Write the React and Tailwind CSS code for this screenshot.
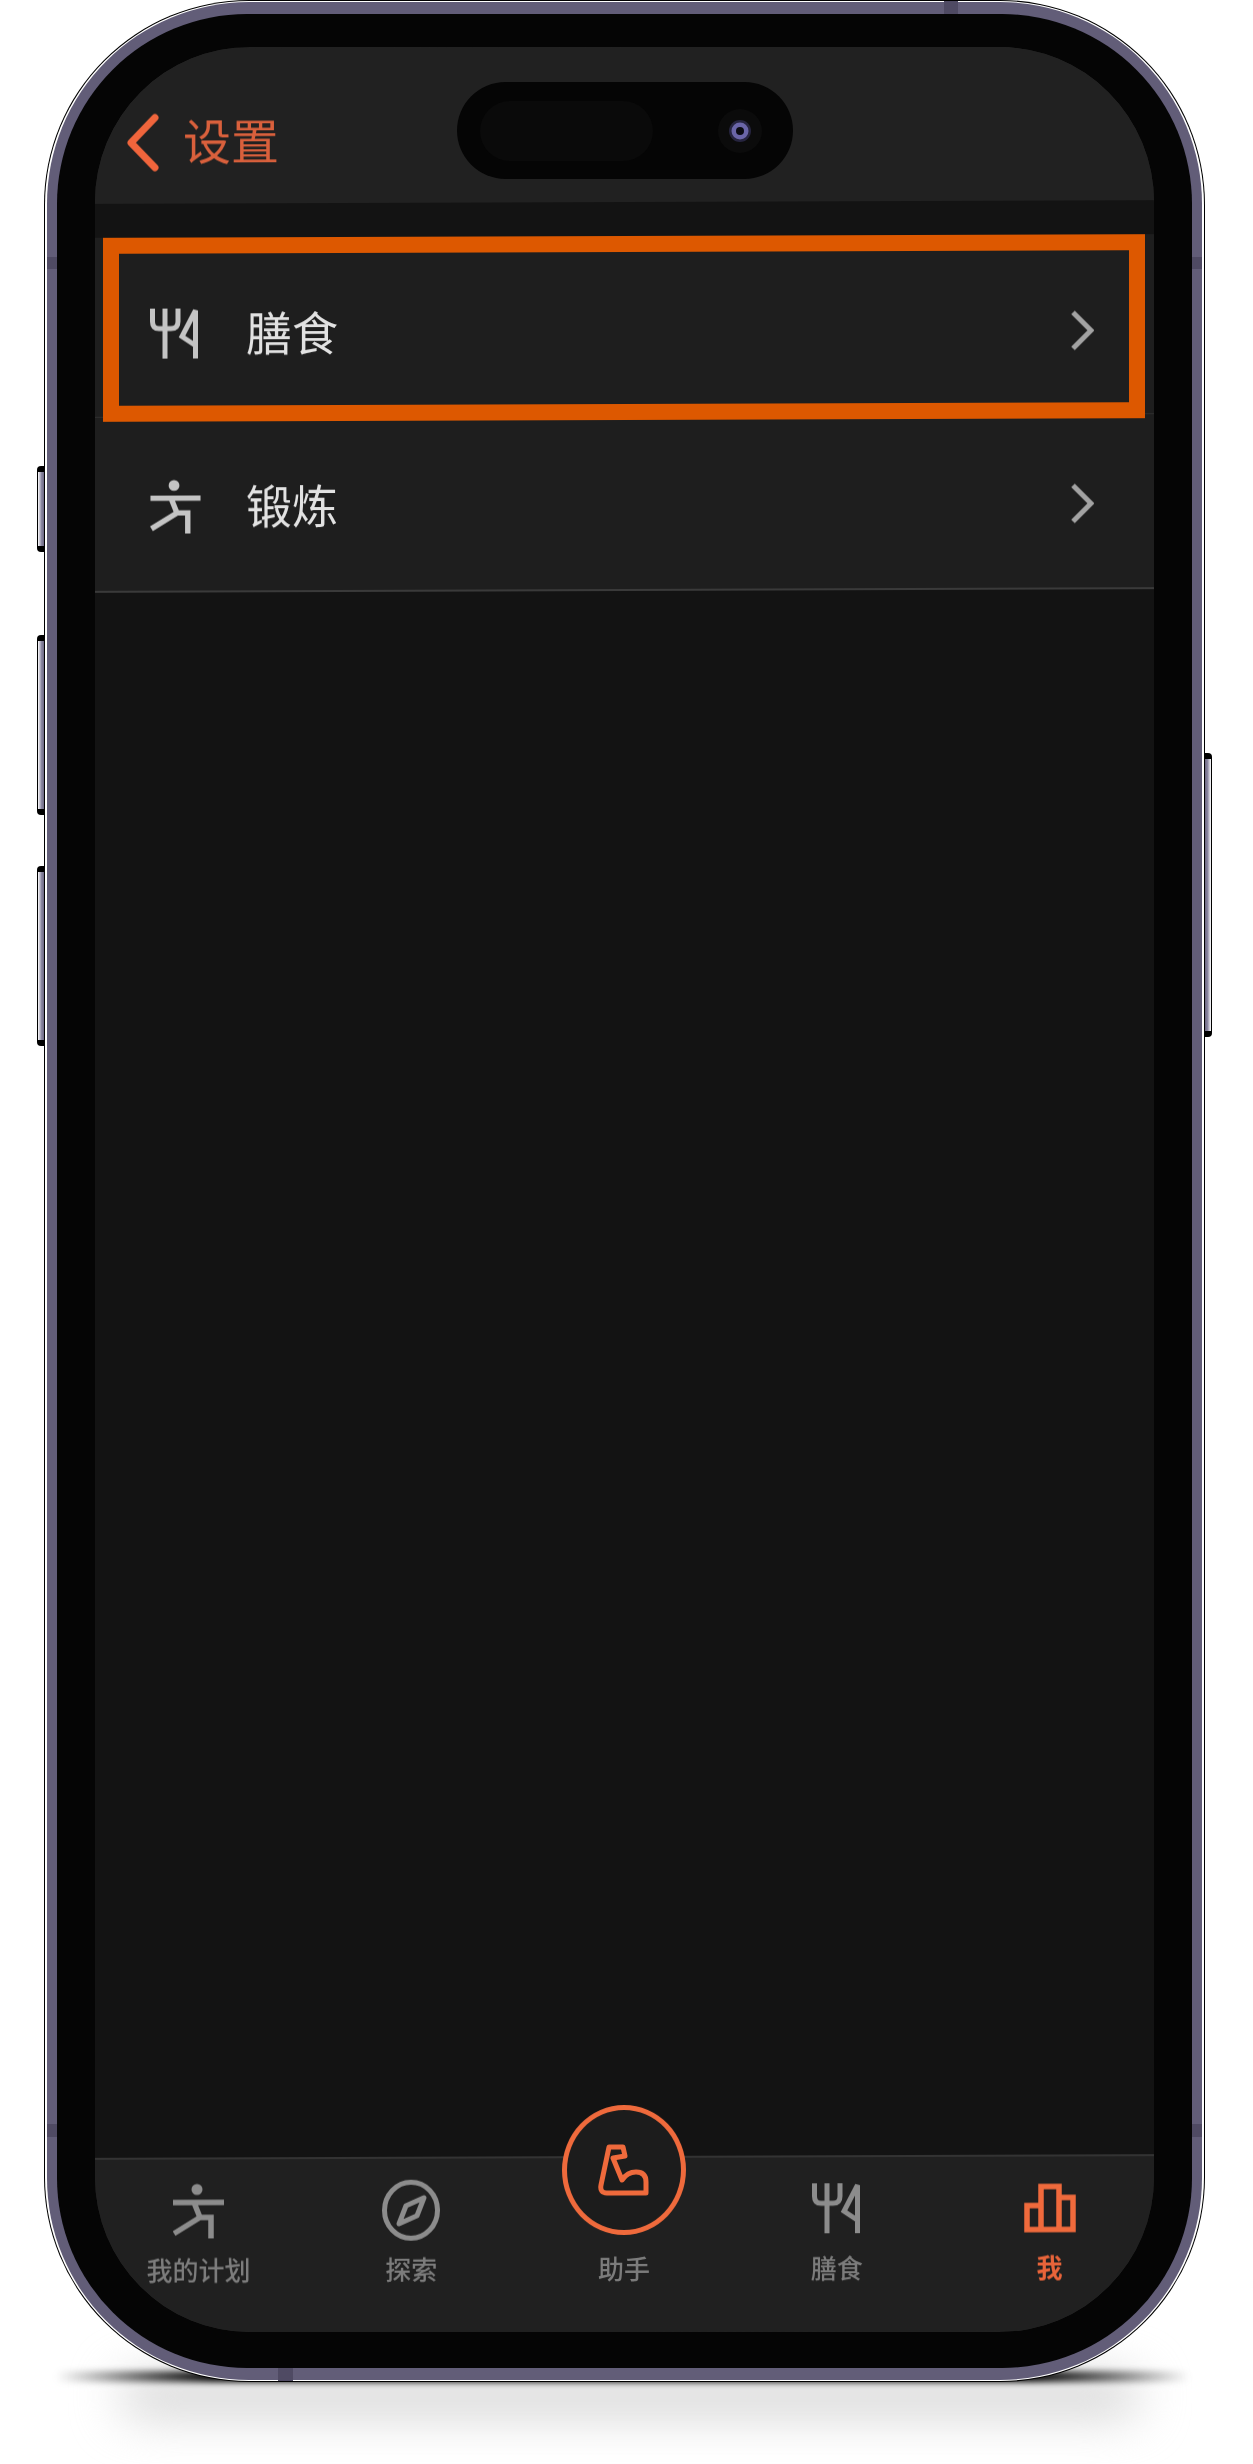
import React from "react";

const FoodIcon = ({ className }) => (
  <svg viewBox="0 0 50 50" className={className} fill="none" stroke="currentColor" strokeWidth="5">
    <path d="M2.5 0V13Q2.5 20 9 20H21Q28 20 28 13V0M15 0V50" />
    <path d="M45.5 50V2L32 28L45.5 37" />
  </svg>
);

const PlanIcon = ({ className }) => (
  <svg viewBox="0 0 51 55" className={className} fill="none" stroke="currentColor" strokeWidth="5.5">
    <circle cx="24" cy="6" r="5.5" fill="currentColor" stroke="none" />
    <path d="M0 19H51M21 19L27 34" />
    <path d="M1 50L27 34H38V55" />
  </svg>
);

const CompassIcon = ({ className }) => (
  <svg viewBox="0 0 58 61" className={className} fill="none" stroke="currentColor" strokeWidth="5">
    <ellipse cx="29" cy="30.5" rx="26.5" ry="28" />
    <path d="M42 18L35 36L17 44L24 26Z" strokeLinejoin="round" />
  </svg>
);

const BarsIcon = ({ className }) => (
  <svg viewBox="0 0 52 49" className={className} fill="none" stroke="currentColor" strokeWidth="5.5">
    <path d="M3 46V22H17V46ZM17 46V3H35V46ZM35 14H49V46H3" />
  </svg>
);

const ArmIcon = ({ className }) => (
  <svg viewBox="0 0 51 52" className={className} fill="none" stroke="currentColor" strokeWidth="5" strokeLinejoin="round">
    <path d="M11 3H25L27 12L15 14L24 36C28 30 33 28 38 28C45 28 48 32 48 38V49H9C4 49 2 46 3 41Z" />
  </svg>
);

const Chevron = () => (
  <svg viewBox="0 0 23 40" className="h-[40px] w-[23px] text-[#a3a3a3]" fill="none" stroke="currentColor" strokeWidth="5">
    <path d="M2 2L20 20L2 38" />
  </svg>
);

const NavItem = ({ icon, label, active }) => (
  <div className="flex flex-col items-center">
    <div className={`flex h-[62px] items-center justify-center ${active ? "text-[#ef6a3c]" : "text-[#8c8c8c]"}`}>
      {icon}
    </div>
    <span className={`mt-[13px] text-[26px] leading-[30px] ${active ? "font-bold text-[#e8643a]" : "font-medium text-[#7c7c7c]"}`}>
      {label}
    </span>
  </div>
);

const Row = ({ icon, label, className }) => (
  <div className={`flex items-center bg-[#1e1e1e] pl-[53px] pr-[60px] ${className}`}>
    <div className="flex w-[54px] justify-center text-[#c4c4c4]">{icon}</div>
    <span className="ml-[44px] flex-1 pb-[6px] text-[46px] leading-[56px] text-[#e2e2e2]">{label}</span>
    <Chevron />
  </div>
);

const SideButton = ({ className }) => (
  <div className={`absolute w-[8px] rounded-l-[4px] bg-black py-[6px] pl-px ${className}`}>
    <div className="h-full bg-gradient-to-r from-white via-[#8a86a0] to-[#625d78]" />
  </div>
);

export default function App() {
  return (
    <div className="relative h-[2464px] w-[1253px] overflow-hidden bg-white font-['Noto_Sans_CJK_SC',sans-serif]">
      {/* Shadow under the phone */}
      <div className="absolute left-[120px] top-[2376px] h-[40px] w-[1020px] rounded-full bg-[#d4d4d4] blur-[24px]" />
      <div className="absolute left-[55px] top-[2371px] h-[11px] w-[1135px] rounded-full bg-[linear-gradient(90deg,transparent,#000_14%,#000_86%,transparent)] blur-[3px]" />

      {/* Side buttons */}
      <SideButton className="left-[37px] top-[466px] h-[86px]" />
      <SideButton className="left-[37px] top-[635px] h-[180px]" />
      <SideButton className="left-[37px] top-[866px] h-[180px]" />
      <div className="absolute left-[1204px] top-[753px] h-[284px] w-[8px] rounded-r-[4px] bg-black py-[6px] pr-px">
        <div className="h-full bg-gradient-to-r from-[#625d78] via-[#8a86a0] to-white" />
      </div>

      {/* Phone frame */}
      <div className="relative ml-[44px] w-[1161px] rounded-[205px] bg-black p-px">
        <div className="rounded-[204px] bg-white px-[2px] py-px">
          <div className="rounded-[202px] bg-[#625d78] px-[10px] py-[12px]">
            <div className="rounded-[190px] bg-[#050505] px-[38px] pb-[36px] pt-[33px]">
              {/* Screen */}
              <div className="relative h-[2285px] overflow-hidden rounded-[155px] bg-[#212121]">
                <div className="flex h-full skew-y-[-0.2deg] flex-col blur-[0.5px]">
                  <div className="flex h-[155px] items-center gap-[24px] bg-[#212121] pl-[32px] pt-[32px]">
                    <svg viewBox="0 0 32 58" className="h-[58px] w-[32px] text-[#f0653c]" fill="none" stroke="currentColor" strokeWidth="7" strokeLinecap="round" strokeLinejoin="round">
                      <path d="M28 4L4 29L28 54" />
                    </svg>
                    <span className="pb-[8px] text-[48px] leading-[56px] text-[#d9603c]">设置</span>
                  </div>
                  <div className="h-[34px] bg-[#131313]" />

                  <div className="relative">
                    <Row icon={<FoodIcon className="h-[50px] w-[50px]" />} label="膳食" className="h-[179px] pt-[12px]" />
                    <div className="h-px bg-[#2e2e2e]" />
                    <Row icon={<PlanIcon className="h-[54px] w-[51px]" />} label="锻炼" className="h-[173px] pt-[4px]" />
                    <div className="h-[2px] bg-[#3a3a3a]" />
                    {/* Highlight box */}
                    <div className="absolute left-[8px] top-0 h-[184px] w-[1042px] border-[16px] border-[#dd5800]" />
                  </div>

                  <div className="flex-1 bg-[#131313]" />

                  {/* Tab bar */}
                  <div className="relative h-[176px] border-t-2 border-[#333333] bg-[#202020] pt-[20px]">
                    <div className="-ml-[3px] -mr-[2px] grid grid-cols-5">
                      <NavItem icon={<PlanIcon className="h-[55px] w-[51px]" />} label="我的计划" />
                      <NavItem icon={<CompassIcon className="h-[61px] w-[58px]" />} label="探索" />
                      <div className="relative flex flex-col items-center">
                        <div className="absolute left-1/2 top-[-73px] flex h-[130px] w-[124px] -translate-x-1/2 items-center justify-center rounded-[50%] border-[5px] border-[#ef6a3c] bg-[#1c1c1c] text-[#ef6a3c]">
                          <ArmIcon className="h-[52px] w-[51px]" />
                        </div>
                        <div className="h-[62px]" />
                        <span className="mt-[13px] text-[26px] font-medium leading-[30px] text-[#7c7c7c]">助手</span>
                      </div>
                      <NavItem icon={<FoodIcon className="h-[50px] w-[50px]" />} label="膳食" />
                      <NavItem icon={<BarsIcon className="h-[49px] w-[52px]" />} label="我" active />
                    </div>
                  </div>
                </div>

                {/* Dynamic island */}
                <div className="absolute left-[362px] top-[35px] flex h-[97px] w-[336px] items-center rounded-[49px] bg-[#050505] pl-[23px]">
                  <div className="h-[60px] w-[173px] rounded-[30px] bg-[#0a0a0a]" />
                  <div className="ml-[65px] flex h-[44px] w-[44px] items-center justify-center rounded-full bg-[#0b0b0b]">
                    <svg viewBox="0 0 24 24" className="h-[24px] w-[24px]">
                      <circle cx="12" cy="12" r="11" fill="#26243f" />
                      <circle cx="12" cy="12" r="8.5" fill="#6a65a8" />
                      <circle cx="12" cy="12" r="4" fill="#0b0b14" />
                    </svg>
                  </div>
                </div>
              </div>
            </div>
          </div>
        </div>

        {/* Antenna bands */}
        <div className="absolute left-[900px] top-[1px] h-[13px] w-[14px] bg-[#4f4a63]" />
        <div className="absolute left-[234px] top-[2368px] h-[13px] w-[15px] bg-[#4f4a63]" />
        <div className="absolute left-[3px] top-[257px] h-[12px] w-[10px] bg-[#4f4a63]" />
        <div className="absolute right-[3px] top-[257px] h-[12px] w-[10px] bg-[#4f4a63]" />
        <div className="absolute left-[3px] top-[2124px] h-[13px] w-[10px] bg-[#4f4a63]" />
        <div className="absolute right-[3px] top-[2124px] h-[13px] w-[10px] bg-[#4f4a63]" />
      </div>
    </div>
  );
}
